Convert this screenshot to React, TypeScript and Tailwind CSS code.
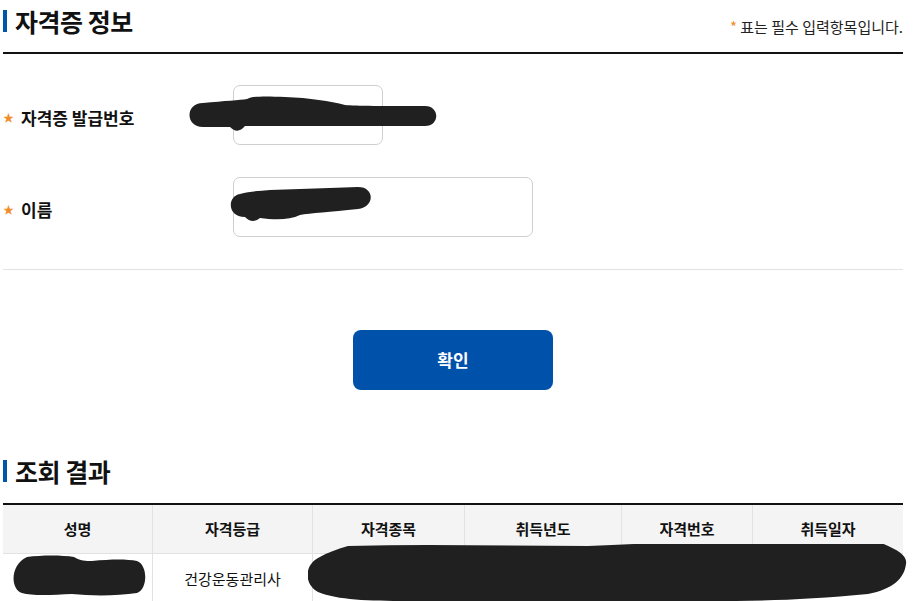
import React from "react";

const font = { fontFamily: '"Noto Sans CJK KR", "Noto Sans", sans-serif' };

function Title({ children }: { children: React.ReactNode }) {
  return (
    <h2 className="flex items-center gap-[8px] text-[25px] leading-[32px] font-bold text-[#111]">
      <span className="block w-[4px] h-[22px] bg-[#0056a8]" />
      <span className="tracking-[-0.5px]">{children}</span>
    </h2>
  );
}

function Blob({ className, d, vb }: { className: string; d: string; vb: string }) {
  return (
    <svg className={"absolute pointer-events-none " + className} viewBox={vb} preserveAspectRatio="none">
      <path d={d} fill="#202020" />
    </svg>
  );
}

export default function App() {
  const cols = [
    { w: "w-[149px]", h: "성명" },
    { w: "w-[160px]", h: "자격등급" },
    { w: "w-[152px]", h: "자격종목" },
    { w: "w-[157px]", h: "취득년도" },
    { w: "w-[131px]", h: "자격번호" },
    { w: "w-[151px]", h: "취득일자" },
  ];
  return (
    <div className="relative w-[915px] h-[601px] overflow-hidden bg-white" style={font}>
      <div className="ml-[3px] w-[900px]">
        {/* header */}
        <div className="flex justify-between items-start h-[52px] border-b-2 border-[#111] box-content pt-[5px] -mt-[5px]">
          <div className="pt-[5px]">
            <Title>자격증 정보</Title>
          </div>
          <p className="mt-[17px] text-[15px] leading-[20px] text-[#222]">
            <span className="text-[#f28c28]">*</span> 표는 필수 입력항목입니다.
          </p>
        </div>

        {/* form */}
        <div className="flex flex-col gap-[32px] pt-[31px] pb-[32px] border-b border-[#e2e2e2]">
          <div className="flex items-center">
            <label className="w-[230px] flex items-center gap-[7px] pt-[5px] text-[17px] font-bold text-[#111]">
              <span className="text-[#f28c28] text-[11px]">★</span>
              자격증 발급번호
            </label>
            <div className="w-[150px] h-[60px] border border-[#cfcfcf] rounded-[7px]" />
          </div>
          <div className="flex items-center">
            <label className="w-[230px] flex items-center gap-[7px] pt-[5px] text-[17px] font-bold text-[#111]">
              <span className="text-[#f28c28] text-[11px]">★</span>
              이름
            </label>
            <div className="w-[300px] h-[60px] border border-[#cfcfcf] rounded-[7px]" />
          </div>
        </div>

        {/* button */}
        <div className="flex justify-center pt-[60px] pb-[65px]">
          <button className="w-[200px] h-[60px] rounded-[8px] bg-[#0051aa] text-white text-[17px] font-bold">
            확인
          </button>
        </div>

        {/* result */}
        <div className="h-[48px]">
          <Title>조회 결과</Title>
        </div>
        <div className="border-t-2 border-[#111]">
          <div className="flex bg-[#f4f4f4] border-b border-[#e2e2e2] h-[49px]">
            {cols.map((c, i) => (
              <div
                key={i}
                className={c.w + " flex items-center justify-center text-[15px] font-bold text-[#111] " + (i > 0 ? "border-l border-[#e2e2e2]" : "")}
              >
                {c.h}
              </div>
            ))}
          </div>
          <div className="flex h-[50px]">
            {cols.map((c, i) => (
              <div
                key={i}
                className={c.w + " flex items-center justify-center text-[15px] text-[#111] " + (i > 0 ? "border-l border-[#e2e2e2]" : "")}
              >
                {i === 1 ? "건강운동관리사" : ""}
              </div>
            ))}
          </div>
        </div>
      </div>

      {/* redaction marks */}
      <Blob
        className="left-[185px] top-[96px] w-[253px] h-[38px]"
        vb="0 0 253 38"
        d="M18 7 C40 5 55 4 62 3 C68 0 80 0 100 1 C125 2 145 5 160 9 C170 10 200 10 240 10 C255 10 255 30 240 30 L60 30 C55 36 50 36 45 31 L18 31 C0 31 0 7 18 7 Z"
      />
      <Blob
        className="left-[230px] top-[187px] w-[143px] h-[36px]"
        vb="0 0 143 36"
        d="M10 7 C20 4 30 4 40 3 C70 2 100 1 128 0 C145 0 145 20 128 22 C100 25 80 26 70 28 C60 33 45 33 30 31 C25 35 20 35 15 30 C-3 30 -3 9 10 7 Z"
      />
      <Blob
        className="left-[12px] top-[555px] w-[134px] h-[41px]"
        vb="0 0 134 41"
        d="M15 2 C30 0 50 0 62 2 C68 6 74 6 80 6 C100 4 115 4 125 6 C136 10 136 34 125 38 C105 41 80 41 60 39 C40 40 20 41 10 38 C-2 34 -2 10 15 2 Z"
      />
      <Blob
        className="left-[308px] top-[544px] w-[599px] h-[57px]"
        vb="0 0 599 57"
        d="M40 2 C120 0 200 2 280 2 C340 0 380 -4 420 -4 C470 -6 530 -8 560 -6 C585 3 600 10 598 20 C596 35 585 45 560 50 C500 56 450 57 400 57 L100 57 C60 57 30 56 10 48 C-4 40 -4 22 10 14 C20 8 30 5 40 2 Z"
      />
    </div>
  );
}
